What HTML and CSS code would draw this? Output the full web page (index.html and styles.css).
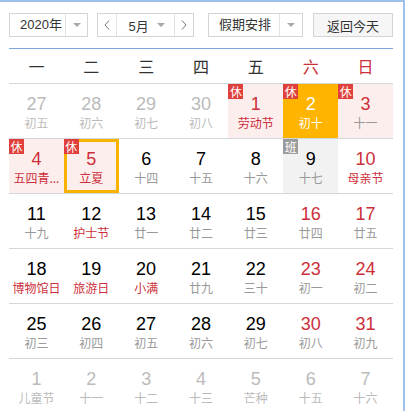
FILE: index.html
```html
<!DOCTYPE html>
<html lang="zh-CN">
<head>
<meta charset="utf-8">
<link rel="stylesheet" href="styles.css">
</head>
<body>
<div class="cal">
  <div class="toolbar">
    <div class="sel year">
      <span class="sel-text">2020年</span>
      <span class="sel-arrow"><i class="tri"></i></span>
    </div>
    <div class="sel month">
      <span class="nav"><svg width="6" height="10" viewBox="0 0 6 10"><polyline points="5,0.5 1,5 5,9.5" fill="none" stroke="#777" stroke-width="1"/></svg></span>
      <span class="month-mid"><span class="m-text">5月</span><i class="tri"></i></span>
      <span class="nav next"><svg width="6" height="10" viewBox="0 0 6 10"><polyline points="1,0.5 5,5 1,9.5" fill="none" stroke="#777" stroke-width="1"/></svg></span>
    </div>
    <div class="sel holiday">
      <span class="sel-text">假期安排</span>
      <span class="sel-arrow"><i class="tri"></i></span>
    </div>
    <div class="btn">返回今天</div>
  </div>
  <div class="rule"></div>
  <div class="grid head">
    <div>一</div><div>二</div><div>三</div><div>四</div><div>五</div><div class="red">六</div><div class="red">日</div>
  </div>
  <div class="grid row">
    <div class="cell other"><div class="num">27</div><div class="lun">初五</div></div>
    <div class="cell other"><div class="num">28</div><div class="lun">初六</div></div>
    <div class="cell other"><div class="num">29</div><div class="lun">初七</div></div>
    <div class="cell other"><div class="num">30</div><div class="lun">初八</div></div>
    <div class="cell rest"><span class="badge">休</span><div class="num red">1</div><div class="lun red">劳动节</div></div>
    <div class="cell today"><span class="badge">休</span><div class="num">2</div><div class="lun">初十</div></div>
    <div class="cell rest"><span class="badge">休</span><div class="num red">3</div><div class="lun">十一</div></div>
  </div>
  <div class="grid row">
    <div class="cell rest"><span class="badge">休</span><div class="num red">4</div><div class="lun red">五四青...</div></div>
    <div class="cell rest picked"><span class="badge">休</span><div class="num red">5</div><div class="lun red">立夏</div></div>
    <div class="cell"><div class="num">6</div><div class="lun">十四</div></div>
    <div class="cell"><div class="num">7</div><div class="lun">十五</div></div>
    <div class="cell"><div class="num">8</div><div class="lun">十六</div></div>
    <div class="cell work"><span class="badge gray">班</span><div class="num">9</div><div class="lun">十七</div></div>
    <div class="cell"><div class="num red">10</div><div class="lun red">母亲节</div></div>
  </div>
  <div class="grid row">
    <div class="cell"><div class="num">11</div><div class="lun">十九</div></div>
    <div class="cell"><div class="num">12</div><div class="lun red">护士节</div></div>
    <div class="cell"><div class="num">13</div><div class="lun">廿一</div></div>
    <div class="cell"><div class="num">14</div><div class="lun">廿二</div></div>
    <div class="cell"><div class="num">15</div><div class="lun">廿三</div></div>
    <div class="cell"><div class="num red">16</div><div class="lun">廿四</div></div>
    <div class="cell"><div class="num red">17</div><div class="lun">廿五</div></div>
  </div>
  <div class="grid row">
    <div class="cell"><div class="num">18</div><div class="lun red">博物馆日</div></div>
    <div class="cell"><div class="num">19</div><div class="lun red">旅游日</div></div>
    <div class="cell"><div class="num">20</div><div class="lun red">小满</div></div>
    <div class="cell"><div class="num">21</div><div class="lun">廿九</div></div>
    <div class="cell"><div class="num">22</div><div class="lun">三十</div></div>
    <div class="cell"><div class="num red">23</div><div class="lun">初一</div></div>
    <div class="cell"><div class="num red">24</div><div class="lun">初二</div></div>
  </div>
  <div class="grid row">
    <div class="cell"><div class="num">25</div><div class="lun">初三</div></div>
    <div class="cell"><div class="num">26</div><div class="lun">初四</div></div>
    <div class="cell"><div class="num">27</div><div class="lun">初五</div></div>
    <div class="cell"><div class="num">28</div><div class="lun">初六</div></div>
    <div class="cell"><div class="num">29</div><div class="lun">初七</div></div>
    <div class="cell"><div class="num red">30</div><div class="lun">初八</div></div>
    <div class="cell"><div class="num red">31</div><div class="lun">初九</div></div>
  </div>
  <div class="grid row last">
    <div class="cell other"><div class="num">1</div><div class="lun">儿童节</div></div>
    <div class="cell other"><div class="num">2</div><div class="lun">十一</div></div>
    <div class="cell other"><div class="num">3</div><div class="lun">十二</div></div>
    <div class="cell other"><div class="num">4</div><div class="lun">十三</div></div>
    <div class="cell other"><div class="num">5</div><div class="lun">芒种</div></div>
    <div class="cell other"><div class="num">6</div><div class="lun">十五</div></div>
    <div class="cell other"><div class="num">7</div><div class="lun">十六</div></div>
  </div>
</div>
</body>
</html>
```

FILE: styles.css
```css
* { box-sizing: border-box; }
html, body { margin: 0; padding: 0; background: #fff; }
body {
  font-family: "Liberation Sans", "Noto Sans CJK SC", sans-serif;
  color: #333;
  overflow: hidden;
}
.cal {
  width: 405px;
  height: 411px;
  border-top: 2px solid #9ec1ea;
  border-right: 2px solid #9ec1ea;
  overflow: hidden;
}
.toolbar {
  display: flex;
  align-items: stretch;
  height: 24px;
  margin: 11px 0 0 9px;
  font-size: 13px;
}
.sel {
  display: flex;
  align-items: stretch;
  border: 1px solid #d4d4d4;
  background: #fff;
}
.sel-text {
  display: flex;
  align-items: center;
  padding-left: 10px;
  line-height: 22px;
}
.sel-arrow {
  display: flex;
  align-items: center;
  justify-content: center;
  border-left: 1px solid #e2e2e2;
}
.tri {
  display: block;
  width: 0;
  height: 0;
  border-left: 4px solid transparent;
  border-right: 4px solid transparent;
  border-top: 4px solid #a8a8a8;
}
.year { width: 79px; }
.year .sel-text { width: 56px; }
.year .sel-arrow { width: 22px; }
.month { width: 97px; margin-left: 9px; }
.nav {
  display: flex;
  align-items: center;
  justify-content: center;
  width: 18px;
}
.month-mid {
  display: flex;
  align-items: center;
  width: 61px;
  border-left: 1px solid #e2e2e2;
  border-right: 1px solid #e2e2e2;
  padding-left: 12px;
}
.m-text { width: 28px; }
.holiday { width: 95px; margin-left: 14px; }
.holiday .sel-text { width: 70px; }
.holiday .sel-arrow { width: 23px; }
.btn {
  width: 80px;
  margin-left: 10px;
  border: 1px solid #d4d4d4;
  background: #f6f6f6;
  display: flex;
  align-items: center;
  justify-content: center;
}
.rule {
  margin: 11px 0 0 9px;
  width: 384px;
  border-top: 1px solid #7ea8dc;
}
.grid {
  display: grid;
  grid-template-columns: repeat(7, 1fr);
  margin-left: 9px;
  width: 384px;
  border-bottom: 1px solid #d3d6da;
}
.head {
  height: 35px;
  font-family: "Noto Sans CJK SC", sans-serif;
  font-size: 16px;
  color: #333;
  text-align: center;
  line-height: 34px;
}
.row { height: 55px; }
.row.last { border-bottom: none; }
.cell {
  position: relative;
  text-align: center;
  padding-top: 9px;
}
.num {
  font-family: "Liberation Sans", sans-serif;
  font-size: 18px;
  line-height: 22px;
  color: #000;
}
.lun {
  font-family: "Noto Sans CJK SC", sans-serif;
  font-size: 12px;
  line-height: 16px;
  color: #999;
  white-space: nowrap;
}
.red, .num.red, .lun.red { color: #cc2f3a; }
.other .num, .other .lun { color: #bbb; }
.rest { background: #fdeeee; }
.work { background: #f2f2f2; }
.today { background: #ffb400; }
.today .num, .today .lun { color: #fff; }
.picked { box-shadow: inset 0 0 0 3px #f7b300; }
.badge {
  position: absolute;
  top: 0;
  left: 0;
  width: 15px;
  height: 15px;
  background: #e0403b;
  color: #fff;
  font-family: "Noto Sans CJK SC", sans-serif;
  font-size: 12px;
  line-height: 15px;
  text-align: center;
}
.badge.gray { background: #9b9b9b; }
```
